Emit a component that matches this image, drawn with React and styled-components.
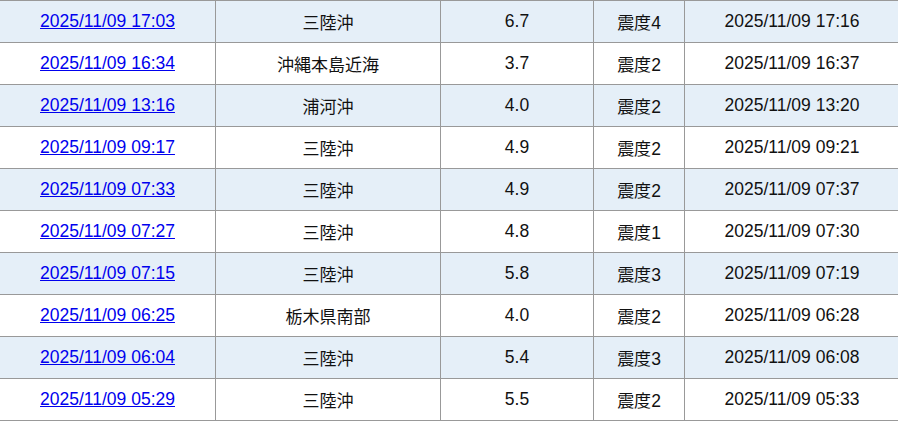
import React from 'react';
import styled, { createGlobalStyle } from 'styled-components';

const GlobalStyle = createGlobalStyle`
  html, body {
    margin: 0;
    padding: 0;
    background: #fff;
    overflow: hidden;
  }
`;

const Wrap = styled.div`
  width: 898px;
  height: 423px;
  overflow: hidden;
`;

const Table = styled.table`
  width: 900px;
  margin-left: -1px;
  border-collapse: collapse;
  table-layout: fixed;
  font-family: "Liberation Sans", Arial, "Noto Sans CJK JP", sans-serif;
  font-size: 17px;
  color: #111;
`;

const Col = styled.col`
  width: ${props => props.w}px;
`;

const Row = styled.tr`
  background: ${props => (props.shaded ? '#e5eff8' : '#ffffff')};
`;

const Cell = styled.td`
  height: 41px;
  padding: 0;
  border: 1px solid #999;
  text-align: center;
  vertical-align: middle;
  white-space: nowrap;
`;

// latin digits render a touch wider in the reference
const Stamp = styled.span`
  font-size: 17.5px;
`;

const Link = styled.a`
  color: #0000ee;
  text-decoration: underline;
  cursor: pointer;
  font-size: 17.5px;
`;

const widths = [216, 225, 153, 91, 215];

const rows = [
  ['17:03', '三陸沖', '6.7', '4', '17:16'],
  ['16:34', '沖縄本島近海', '3.7', '2', '16:37'],
  ['13:16', '浦河沖', '4.0', '2', '13:20'],
  ['09:17', '三陸沖', '4.9', '2', '09:21'],
  ['07:33', '三陸沖', '4.9', '2', '07:37'],
  ['07:27', '三陸沖', '4.8', '1', '07:30'],
  ['07:15', '三陸沖', '5.8', '3', '07:19'],
  ['06:25', '栃木県南部', '4.0', '2', '06:28'],
  ['06:04', '三陸沖', '5.4', '3', '06:08'],
  ['05:29', '三陸沖', '5.5', '2', '05:33'],
];

const App = () => (
  <Wrap>
    <GlobalStyle />
    <Table>
      <colgroup>
        {widths.map((w, i) => (
          <Col key={i} w={w} />
        ))}
      </colgroup>
      <tbody>
        {rows.map(([time, place, mag, shindo, announced], i) => (
          <Row key={time} shaded={i % 2 === 0}>
            <Cell>
              <Link>{`2025/11/09 ${time}`}</Link>
            </Cell>
            <Cell>{place}</Cell>
            <Cell>
              <Stamp>{mag}</Stamp>
            </Cell>
            <Cell>
              震度<Stamp>{shindo}</Stamp>
            </Cell>
            <Cell>
              <Stamp>{`2025/11/09 ${announced}`}</Stamp>
            </Cell>
          </Row>
        ))}
      </tbody>
    </Table>
  </Wrap>
);

export default App;
